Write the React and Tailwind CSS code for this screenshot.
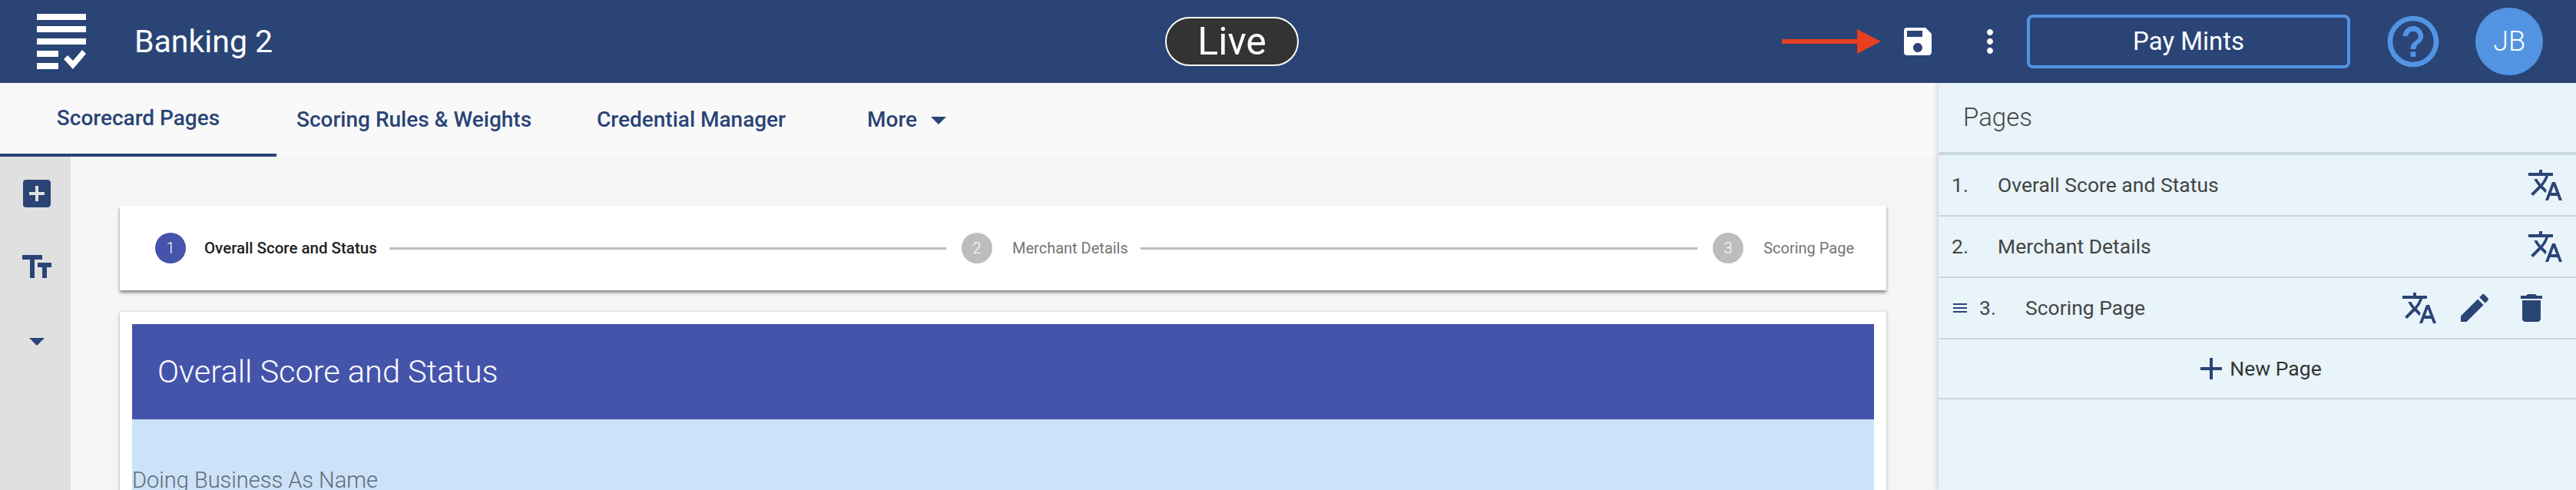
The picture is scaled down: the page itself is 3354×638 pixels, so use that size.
import React from "react";
import {
  MdSave,
  MdMoreVert,
  MdHelpOutline,
  MdTranslate,
  MdEdit,
  MdDelete,
  MdAddBox,
  MdTextFields,
  MdArrowDropDown,
  MdAdd,
  MdMenu,
} from "react-icons/md";

function Logo() {
  return (
    <svg width="64" height="72" viewBox="0 0 64 72" fill="#fff" className="shrink-0">
      <rect x="0" y="0" width="64" height="8" />
      <rect x="0" y="16" width="64" height="8" />
      <rect x="0" y="32" width="64" height="8" />
      <rect x="0" y="48" width="28" height="8" />
      <rect x="0" y="64" width="28" height="8" />
      <path d="M35 59l5-5 7 7 12-14 5 5-17 20z" />
    </svg>
  );
}

function RedArrow() {
  return (
    <svg width="129" height="32" viewBox="0 0 129 32" className="shrink-0">
      <path d="M0 13h98V0l31 16-31 16V19H0z" fill="#e83e22" />
    </svg>
  );
}

function Step({ num, label, active }) {
  return (
    <div className="flex items-center shrink-0">
      <div
        className={
          active
            ? "w-10 h-10 rounded-full flex items-center justify-center bg-[#4454ab] text-white text-[20px] font-light"
            : "w-10 h-10 rounded-full flex items-center justify-center bg-[#bdbdbd] text-white text-[20px] font-light"
        }
      >
        {num}
      </div>
      <span
        className={
          active
            ? "ml-6 text-[20.5px] font-medium text-[#212121]"
            : "ml-[26px] text-[20px] text-[#757575]"
        }
      >
        {label}
      </span>
    </div>
  );
}

function PageRow({ num, name, editable }) {
  return (
    <div className="h-[80px] pl-[17px] pr-4 flex items-center border-b-2 border-[#c9d7df] text-[26.5px] text-[#444]">
      {editable && <MdMenu size={24} className="text-[#2a4476] mr-[13px] -ml-px shrink-0" />}
      <span className="w-[60px] shrink-0">{num}.</span>
      <span>{name}</span>
      <div className="ml-auto flex items-center text-[#2a4476]">
        <MdTranslate size={48} />
        {editable && (
          <>
            <MdEdit size={48} className="ml-6" />
            <MdDelete size={48} className="ml-[26px] mr-[18px]" />
          </>
        )}
      </div>
    </div>
  );
}

export default function App() {
  return (
    <div className="w-[3354px] h-[638px] overflow-hidden flex flex-col bg-[#f5f5f5] font-['Roboto',sans-serif]">
      {/* top bar */}
      <div className="h-[108px] shrink-0 bg-[#2a4476] flex items-center pl-[48px] text-white">
        <Logo />
        <span className="ml-[63px] text-[41px] leading-none">Banking 2</span>
        <div className="ml-[1162px] w-[174px] h-[64px] rounded-[32px] border-2 border-white bg-[#333] flex items-center justify-center text-[50px] leading-none">
          Live
        </div>
        <div className="ml-[629px]">
          <RedArrow />
        </div>
        <MdSave size={48} className="ml-[24px] shrink-0" />
        <MdMoreVert size={48} className="ml-[46px] shrink-0" />
        <button className="ml-[24px] w-[421px] h-[70px] rounded-lg border-4 border-[#5294e2] text-[33px]">
          Pay Mints
        </button>
        <MdHelpOutline size={80} className="ml-[42px] text-[#5294e2] shrink-0" />
        <div className="ml-[41px] w-[88px] h-[88px] rounded-full bg-[#5294e2] flex items-center justify-center text-[36px] font-light">
          JB
        </div>
      </div>

      <div className="flex flex-1 min-h-0">
        {/* main column */}
        <div className="flex-1 min-w-0 flex flex-col">
          <div className="h-[96px] shrink-0 bg-[#f9f9f9] flex text-[#2a4476] text-[28px] font-medium">
            <div className="w-[360px] flex items-center justify-center border-b-4 border-[#2a4476]">
              Scorecard Pages
            </div>
            <div className="ml-[26px] flex items-center">Scoring Rules &amp; Weights</div>
            <div className="ml-[85px] flex items-center">Credential Manager</div>
            <div className="ml-[106px] flex items-center">
              More
              <MdArrowDropDown size={48} className="ml-1" />
            </div>
          </div>
          <div className="flex flex-1 min-h-0">
            <div className="w-[92px] shrink-0 bg-[#e0e0e0] pt-6 pl-6 flex flex-col gap-12 text-[#2a4476]">
              <MdAddBox size={48} />
              <MdTextFields size={48} />
              <MdArrowDropDown size={48} />
            </div>
            <div className="flex-1 min-w-0 pt-16 pl-16 pr-[68px] flex flex-col gap-7">
              <div className="h-[110px] shrink-0 bg-white shadow-[0_3px_4px_rgba(0,0,0,0.45)] flex items-center pl-[46px] pr-[42px]">
                <Step num="1" label="Overall Score and Status" active />
                <div className="flex-1 h-[3px] bg-[#bdbdbd] ml-4 mr-5" />
                <Step num="2" label="Merchant Details" />
                <div className="flex-1 h-[3px] bg-[#bdbdbd] ml-4 mr-5" />
                <Step num="3" label="Scoring Page" />
              </div>
              <div className="flex-1 bg-white shadow-[0_1px_4px_rgba(0,0,0,0.3)] pt-4 px-4 flex flex-col">
                <div className="h-[124px] shrink-0 bg-[#4454ab] flex items-center pl-[33px] text-white text-[41.5px] font-light">
                  Overall Score and Status
                </div>
                <div className="flex-1 bg-[#cce2f9] pt-[61px] text-[#5f6b78] text-[29px] font-light leading-[36px]">
                  Doing Business As Name
                </div>
              </div>
            </div>
          </div>
        </div>

        {/* pages panel */}
        <div className="w-[830px] shrink-0 bg-[#e8f4f9] shadow-[-2px_0_6px_rgba(0,0,0,0.15)] z-10">
          <div className="h-[94px] flex items-center pl-8 border-b-4 border-[#c9d7df] text-[33px] font-light text-[#444]">
            Pages
          </div>
          <PageRow num="1" name="Overall Score and Status" />
          <PageRow num="2" name="Merchant Details" />
          <PageRow num="3" name="Scoring Page" editable />
          <div className="h-[78px] flex items-center justify-center border-b-2 border-[#c9d7df] text-[26.5px] text-[#333]">
            <MdAdd size={48} className="text-[#2a4476]" />
            <span>New Page</span>
          </div>
        </div>
      </div>
    </div>
  );
}
